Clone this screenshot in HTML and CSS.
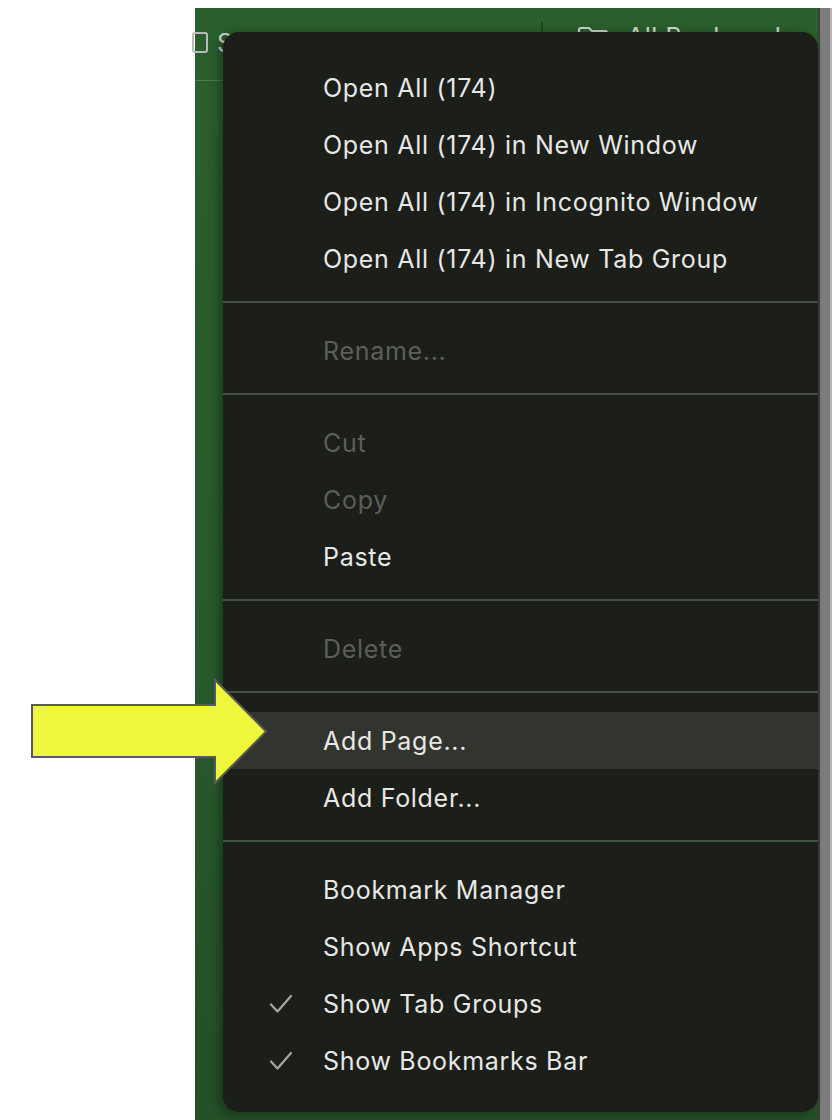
FILE: index.html
```html
<!DOCTYPE html>
<html>
<head>
<meta charset="utf-8">
<link rel="stylesheet" href="styles.css">
</head>
<body>
<div class="page">
  <div class="blank"></div>
  <div class="window">
    <div class="toolbar">
      <span class="tab-icon"></span>
      <span class="search-text">Search bookmarks</span>
      <span class="tb-divider"></span>
      <svg class="folder" width="32" height="24" viewBox="0 0 32 24"><path d="M2 20V4a2 2 0 0 1 2-2h8l3 3h13a2 2 0 0 1 2 2v13a2 2 0 0 1-2 2H4a2 2 0 0 1-2-2z" fill="none" stroke="#c9cbc8" stroke-width="2.2"/></svg>
      <span class="all-text">All Bookmarks</span>
    </div>
  </div>
  <div class="edge"></div>
  <div class="scroll"></div>
  <div class="scroll-light"></div>

  <div class="menu">
    <div class="item">Open All (174)</div>
    <div class="item">Open All (174) in New Window</div>
    <div class="item">Open All (174) in Incognito Window</div>
    <div class="item">Open All (174) in New Tab Group</div>
    <div class="sep"></div>
    <div class="item disabled">Rename...</div>
    <div class="sep"></div>
    <div class="item disabled">Cut</div>
    <div class="item disabled">Copy</div>
    <div class="item">Paste</div>
    <div class="sep"></div>
    <div class="item disabled">Delete</div>
    <div class="sep"></div>
    <div class="item active">Add Page...</div>
    <div class="item">Add Folder...</div>
    <div class="sep"></div>
    <div class="item">Bookmark Manager</div>
    <div class="item">Show Apps Shortcut</div>
    <div class="item"><svg class="check" width="24" height="20" viewBox="0 0 24 20"><path d="M2 10.5l6.5 7L22 2" fill="none" stroke="#a6a8a4" stroke-width="2.2" stroke-linecap="round" stroke-linejoin="round"/></svg>Show Tab Groups</div>
    <div class="item"><svg class="check" width="24" height="20" viewBox="0 0 24 20"><path d="M2 10.5l6.5 7L22 2" fill="none" stroke="#a6a8a4" stroke-width="2.2" stroke-linecap="round" stroke-linejoin="round"/></svg>Show Bookmarks Bar</div>
  </div>

  <svg class="arrow" width="240" height="110" viewBox="30 678 240 110">
    <polygon points="32,705 215,705 215,680 266,731.5 215,783 215,757 32,757" fill="#eef73b" stroke="#5a5a5a" stroke-width="2" stroke-linejoin="miter"/>
  </svg>
</div>
</body>
</html>
```

FILE: styles.css
```css
html, body {
  margin: 0;
  padding: 0;
  background: #ffffff;
}

.page {
  position: relative;
  width: 840px;
  height: 1120px;
  display: flex;
  padding-top: 8px;
  box-sizing: border-box;
  overflow: hidden;
  font-family: Inter, "Noto Sans", "Liberation Sans", sans-serif;
}

.blank {
  width: 195px;
  flex: none;
}

.window {
  width: 623px;
  flex: none;
  background: linear-gradient(180deg, #2a5e2c 0%, #28592b 60%, #244f27 100%);
}

.edge {
  width: 2px;
  flex: none;
  background: #3a3d3a;
}

.scroll {
  width: 10px;
  flex: none;
  background: #7c7c7c;
}

.scroll-light {
  width: 2px;
  flex: none;
  background: #b4b4b4;
}

.toolbar {
  height: 73px;
  border-bottom: 1px solid #4f7b51;
  box-sizing: border-box;
  display: flex;
  align-items: flex-start;
  padding-top: 12px;
  color: #d4d6d2;
  font-size: 25px;
  line-height: 30px;
}

.tab-icon {
  width: 12px;
  height: 17px;
  margin-left: -3px;
  margin-top: 12px;
  border: 2px solid #b9bcb7;
  border-radius: 3px;
  flex: none;
}

.search-text {
  margin-left: 9px;
  margin-top: 8px;
  width: 324px;
  white-space: nowrap;
  overflow: hidden;
  flex: none;
  letter-spacing: 0.5px;
}

.tb-divider {
  width: 2px;
  height: 14px;
  margin-top: 2px;
  background: #1f4622;
  flex: none;
}

.folder {
  margin-left: 34px;
  margin-top: 6px;
  flex: none;
}

.all-text {
  margin-left: 18px;
  margin-top: 2px;
  white-space: nowrap;
  letter-spacing: 0.5px;
}

.menu {
  position: absolute;
  left: 223px;
  top: 32px;
  width: 595px;
  height: 1080px;
  box-sizing: border-box;
  padding-top: 27px;
  background: #1b1e19;
  border-radius: 16px;
  box-shadow: -4px 2px 10px rgba(0, 0, 0, 0.35);
}

.item {
  height: 57px;
  display: flex;
  align-items: center;
  padding-left: 100px;
  position: relative;
  color: #e7e8e5;
  font-size: 25px;
  letter-spacing: 0.7px;
  white-space: nowrap;
}

.item.disabled {
  color: #5c5e5a;
}

.item.active {
  background: #32342e;
}

.check {
  position: absolute;
  left: 46px;
  top: 19px;
}

.sep {
  height: 2px;
  margin: 14px 0 19px;
  background: #455042;
}

.arrow {
  position: absolute;
  left: 30px;
  top: 678px;
}
```
